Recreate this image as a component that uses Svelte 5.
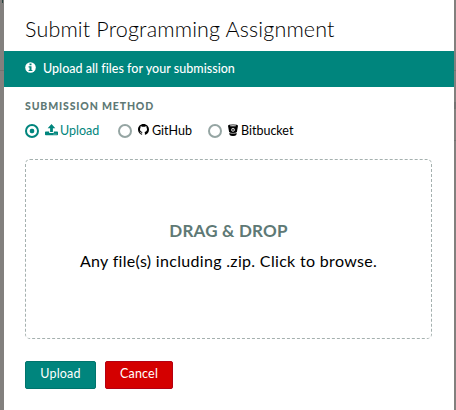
<script>
  let method = $state('Upload');
  const methods = ['Upload', 'GitHub', 'Bitbucket'];
</script>

<div class="page">
  <section class="modal">
    <h1>Submit Programming Assignment</h1>
    <div class="banner">
      <svg width="11" height="11" viewBox="0 0 11 11"><circle cx="5.5" cy="5.5" r="5.3" fill="#fff" /><path d="M4.5 1.6h2v1.6h-2zM3.6 4.3h2.9v3.6h.9v1.2H3.6V7.900h.9V5.500h-.9z" fill="#00857d" /></svg>
      <span>Upload all files for your submission</span>
    </div>
    <div class="body">
      <h2>SUBMISSION METHOD</h2>
      <div class="methods">
        {#each methods as name}
          <button class="option {name.toLowerCase()}" class:selected={method === name} onclick={() => (method = name)}>
            <span class="radio"></span>
            {#if name === 'Upload'}
              <svg width="13" height="12" viewBox="0 0 13 12" fill="currentColor"><path d="M6.500 0L10.300 4.200H7.900V8H5.100V4.200H2.700z" /><path d="M.8 7.500H4.200V9H8.800V7.500h3.400q.8 0 .8.800v2.200q0 .8-.8.800H.8q-.8 0-.8-.8V8.300q0-.8.8-.8zM8.600 9.700v.8h.9v-.8zm1.900 0v.8h.9v-.8z" fill-rule="evenodd" /></svg>
            {:else if name === 'GitHub'}
              <svg width="11" height="11" viewBox="0 0 16 16" fill="currentColor"><path d="M8 0C3.580 0 0 3.580 0 8c0 3.540 2.290 6.530 5.470 7.590.4.070.55-.17.55-.38 0-.19-.01-.82-.01-1.490-2.010.37-2.530-.49-2.690-.94-.09-.23-.48-.94-.82-1.130-.28-.15-.68-.52-.01-.53.63-.01 1.080.58 1.230.82.72 1.210 1.870.87 2.330.66.070-.52.28-.87.51-1.070-1.780-.2-3.640-.89-3.640-3.950 0-.87.31-1.590.82-2.150-.08-.2-.36-1.020.08-2.120 0 0 .67-.21 2.200.82a7.600 7.600 0 0 1 4 0c1.530-1.040 2.200-.82 2.200-.82.44 1.100.16 1.920.08 2.120.51.56.82 1.270.82 2.150 0 3.070-1.870 3.750-3.650 3.950.29.25.54.73.54 1.480 0 1.070-.01 1.930-.01 2.200 0 .21.15.46.55.38A8 8 0 0 0 16 8c0-4.420-3.580-8-8-8z" /></svg>
            {:else}
              <svg width="10" height="12" viewBox="0 0 10 12"><path d="M0 1.700Q.2.400 5 .4T10 1.700L8.900 8.100Q8.400 9 5 9T1.100 8.100zM1.300 8.900Q3 9.600 5 9.600T8.700 8.900L8.300 11Q7.400 12 5 12T1.700 11z" fill="currentColor" /><ellipse cx="5" cy="1.800" rx="3.300" ry=".5" fill="#fff" /><circle cx="5" cy="5.800" r="1.500" fill="none" stroke="#fff" stroke-width=".8" /><circle cx="5" cy="5.800" r=".5" fill="#fff" /></svg>
            {/if}
            <span class="label">{name}</span>
          </button>
        {/each}
      </div>
      <div class="drop">
        <strong>DRAG &amp; DROP</strong>
        <p>Any file(s) including .zip. Click to browse.</p>
      </div>
      <div class="actions">
        <button class="submit">Upload</button>
        <button class="cancel">Cancel</button>
      </div>
    </div>
  </section>
</div>

<style>
  .page {
    box-sizing: border-box;
    width: 456px;
    height: 410px;
    padding: 0 2px 0 4px;
    overflow: hidden;
    background:
      linear-gradient(#294541, #294541) 2px 0 / 1px 3px no-repeat,
      linear-gradient(#747270, #747270) 0 70px / 100% 1px no-repeat,
      linear-gradient(#737372, #737372) 454px 102px / 2px 7px no-repeat,
      linear-gradient(#737170, #737170) 454px 140px / 2px 1px no-repeat,
      #82807e;
    font-family: Lato, "Liberation Sans", sans-serif;
    color: #000;
  }
  .modal { height: 410px; background: #fff; }
  h1 {
    margin: 0;
    box-sizing: border-box;
    height: 51px;
    padding: 14px 0 0 21px;
    font-size: 21.500px;
    line-height: 30px;
    font-weight: 300;
    letter-spacing: .16px;
    white-space: nowrap;
  }
  .banner {
    display: flex;
    align-items: center;
    height: 36px;
    box-sizing: border-box;
    padding: 0 0 2px 21px;
    gap: 7px;
    background: #00857d;
    color: #fff;
    font-size: 12.500px;
    font-weight: 500;
    letter-spacing: .03px;
  }
  .banner svg { margin-top: -1px; }
  .body { padding: 13px 22px 0 21px; }
  h2 {
    margin: 0;
    font-size: 10.500px;
    line-height: 13px;
    font-weight: 900;
    letter-spacing: .85px;
    color: #5e7975;
  }
  .methods { display: flex; height: 46px; padding-top: 10px; box-sizing: border-box; }
  button { font: inherit; color: inherit; border: 0; background: none; padding: 0; }
  .option {
    display: flex;
    align-items: center;
    height: 16px;
    font-size: 12.500px;
  }
  .option svg { margin-top: -3px; flex: none; }
  .upload { width: 93px; }
  .github { width: 90px; }
  .label { margin: -1px 0 0 2px; }
  .github .label { margin-left: 3px; }
  .bitbucket .label { margin-left: 3px; }
  .radio {
    box-sizing: border-box;
    width: 14px;
    height: 14px;
    margin: 0 6px 0 0;
    border: 2px solid #95a5a3;
    border-radius: 50%;
    flex: none;
  }
  .selected { color: #00857d; }
  .selected .radio {
    border-color: #00857d;
    background: radial-gradient(circle, #00857d 2px, transparent 2.700px);
  }
  .drop {
    box-sizing: border-box;
    height: 180px;
    border: 1px dashed #a5b1af;
    border-radius: 5px;
    padding-top: 60px;
    text-align: center;
  }
  .drop strong { display: block; font-size: 17px; line-height: 22px; letter-spacing: .2px; color: #5e7975; }
  .drop p { margin: 8px 0 0; font-size: 16px; line-height: 22px; letter-spacing: .32px; }
  .actions { display: flex; gap: 9px; margin-top: 22px; }
  .actions button {
    height: 28px;
    padding-bottom: 3px;
    border: 1px solid #00746c;
    border-radius: 2px;
    background: #00857d;
    color: #fff;
    font-size: 12.500px;
    letter-spacing: .2px;
  }
  .actions .submit { width: 71px; }
  .actions .cancel { width: 68px; background: #d40000; border-color: #b50012; }
</style>
